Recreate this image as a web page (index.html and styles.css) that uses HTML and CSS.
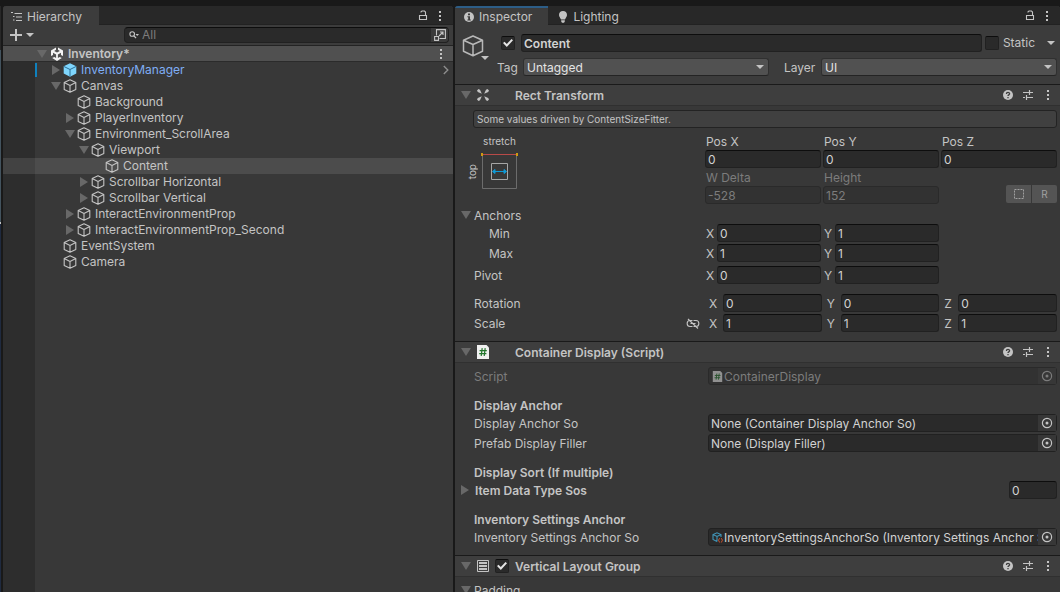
FILE: index.html
```html
<!DOCTYPE html>
<html lang="en">
<head>
  <meta charset="UTF-8" />
  <meta name="viewport" content="width=device-width, initial-scale=1.0"/>
  <title>Inventory - Editor</title>
  <link rel="stylesheet" href="styles.css">
</head>
<body>
  <!-- shared icons -->
  <svg class="defs" aria-hidden="true">
    <symbol id="cube" viewBox="0 0 14 14">
      <path d="M7 .8 12.8 3.6V10.4L7 13.3 1.2 10.4V3.6ZM1.2 3.6 7 6.4 12.8 3.6M7 6.4V13.3" fill="none" stroke="currentColor" stroke-width="1.1" stroke-linejoin="round"/>
    </symbol>
    <symbol id="prefab" viewBox="0 0 14 14">
      <path d="M7 .3 13.3 3.2V10.6L7 13.8.7 10.6V3.2Z" fill="#7fd6fd"/>
      <path d="M1 3.5 7 6.5 13 3.5M7 6.5V13.5" fill="none" stroke="#2c6f95" stroke-width="1"/>
    </symbol>
    <symbol id="unity" viewBox="0 0 14 14">
      <path d="M6 .5V2.800L4.200 3.900 7 5.500 9.800 3.900 8 2.800V.5L13 3.500V9L11 7.900V5.800L7.900 7.600V11L9.700 9.900 11.800 11.100 7 13.900 2.200 11.100 4.300 9.900 6.100 11V7.600L3 5.800V7.900L1 9V3.500Z" fill="#f4f4f4"/>
    </symbol>
    <symbol id="down" viewBox="0 0 10 8"><path d="M0 0H10L5 8Z" fill="currentColor"/></symbol>
    <symbol id="right" viewBox="0 0 8 10"><path d="M0 0 8 5 0 10Z" fill="currentColor"/></symbol>
    <symbol id="caret" viewBox="0 0 8 4"><path d="M0 0H8L4 4Z" fill="currentColor"/></symbol>
    <symbol id="lock" viewBox="0 0 10 11">
      <path d="M1.5 5.5H8.5V9.5H1.5ZM3 2.5V1.8L4 1H6.5L7.5 2V5.5" fill="none" stroke="currentColor" stroke-width="1.1"/>
    </symbol>
    <symbol id="dots" viewBox="0 0 4 12">
      <path d="M1 1H3V3H1ZM1 5H3V7H1ZM1 9H3V11H1Z" fill="currentColor"/>
    </symbol>
    <symbol id="help" viewBox="0 0 10 10">
      <circle cx="5" cy="5" r="5" fill="#c4c4c4"/>
      <path d="M3.4 3.9C3.4 1.9 6.6 1.9 6.6 3.8 6.6 4.9 5 4.8 5 6M5 6.9V8.2" fill="none" stroke="#3c3c3c" stroke-width="1.3"/>
    </symbol>
    <symbol id="preset" viewBox="0 0 12 12">
      <path d="M1 3.500H7M7.500 1V6M7.500 3.500H11M1 8.500H3M4.500 6V11M4.500 8.500H11" fill="none" stroke="#c4c4c4" stroke-width="1.2"/>
    </symbol>
    <symbol id="picker" viewBox="0 0 12 12">
      <circle cx="6" cy="6" r="4.6" fill="none" stroke="currentColor" stroke-width="1.2"/>
      <circle cx="6" cy="6" r="1.5" fill="currentColor"/>
    </symbol>
    <symbol id="script" viewBox="0 0 12 14">
      <path d="M0 0H9.5L12 2.5V14H0Z" fill="#f0f0f0"/>
      <path d="M5.2 3.2 4.2 11M8.2 3.2 7.2 11M2.6 5.7H9.8M2.2 8.6H9.4" fill="none" stroke="#23762c" stroke-width="1.2"/>
    </symbol>
  </svg>

  <div class="edge"></div>

  <section class="panel hierarchy">
    <div class="tabs">
      <button class="tab active">
        <svg width="12" height="10" viewBox="0 0 12 10"><path d="M0 .5H2M3.5 1.5H11M2 4.5H3.5M5 5H11M2 8H3.5M5 8.5H11" fill="none" stroke="#c4c4c4" stroke-width="1"/></svg>
        Hierarchy
      </button>
      <div class="tab-tools">
        <button aria-label="Lock"><svg width="10" height="11"><use href="#lock"/></svg></button>
        <button aria-label="Menu"><svg width="4" height="12"><use href="#dots"/></svg></button>
      </div>
    </div>
    <div class="toolbar">
      <button class="add" aria-label="Create">
        <svg width="12" height="12" viewBox="0 0 12 12"><path d="M6 0V12M0 6H12" stroke="#c4c4c4" stroke-width="2"/></svg>
        <svg width="8" height="4"><use href="#caret"/></svg>
      </button>
      <div class="search">
        <svg width="10" height="8" viewBox="0 0 10 8"><circle cx="3.2" cy="3" r="2.3" fill="none" stroke="#c4c4c4" stroke-width="1.1"/><path d="M5 4.8 7 7.2" stroke="#c4c4c4" stroke-width="1.3"/><path d="M6.5 3H10L8.2 5Z" fill="#c4c4c4"/></svg>
        <input type="text" placeholder="All" aria-label="Search hierarchy">
        <button aria-label="Open search window">
          <svg width="12" height="12" viewBox="0 0 12 12"><path d="M2.5 6.5V.6H11.4V9.5H5.5M.6 7.5H4.5V11.4H.6ZM5 7 9 3M6 3H9V6" fill="none" stroke="#c4c4c4" stroke-width="1.1"/></svg>
        </button>
      </div>
    </div>

    <div class="row scene">
      <svg class="fold" width="10" height="8"><use href="#down"/></svg>
      <svg width="14" height="14"><use href="#unity"/></svg>
      <span>Inventory*</span>
      <button class="row-end" aria-label="Scene menu"><svg width="4" height="12"><use href="#dots"/></svg></button>
    </div>
    <div class="tree">
      <div class="row d1 prefab">
        <svg class="fold" width="8" height="10"><use href="#right"/></svg>
        <svg width="14" height="14"><use href="#prefab"/></svg>
        <span>InventoryManager</span>
        <button class="row-end" aria-label="Open prefab"><svg width="6" height="10" viewBox="0 0 6 10"><path d="M.8 1 4.8 5 .8 9" fill="none" stroke="#8c8c8c" stroke-width="1.4"/></svg></button>
      </div>
      <div class="row d1">
        <svg class="fold" width="10" height="8"><use href="#down"/></svg>
        <svg width="14" height="14"><use href="#cube"/></svg>
        <span>Canvas</span>
      </div>
      <div class="row d2">
        <i class="fold"></i>
        <svg width="14" height="14"><use href="#cube"/></svg>
        <span>Background</span>
      </div>
      <div class="row d2">
        <svg class="fold" width="8" height="10"><use href="#right"/></svg>
        <svg width="14" height="14"><use href="#cube"/></svg>
        <span>PlayerInventory</span>
      </div>
      <div class="row d2">
        <svg class="fold" width="10" height="8"><use href="#down"/></svg>
        <svg width="14" height="14"><use href="#cube"/></svg>
        <span>Environment_ScrollArea</span>
      </div>
      <div class="row d3">
        <svg class="fold" width="10" height="8"><use href="#down"/></svg>
        <svg width="14" height="14"><use href="#cube"/></svg>
        <span>Viewport</span>
      </div>
      <div class="row d4 selected">
        <i class="fold"></i>
        <svg width="14" height="14"><use href="#cube"/></svg>
        <span>Content</span>
      </div>
      <div class="row d3">
        <svg class="fold" width="8" height="10"><use href="#right"/></svg>
        <svg width="14" height="14"><use href="#cube"/></svg>
        <span>Scrollbar Horizontal</span>
      </div>
      <div class="row d3">
        <svg class="fold" width="8" height="10"><use href="#right"/></svg>
        <svg width="14" height="14"><use href="#cube"/></svg>
        <span>Scrollbar Vertical</span>
      </div>
      <div class="row d2">
        <svg class="fold" width="8" height="10"><use href="#right"/></svg>
        <svg width="14" height="14"><use href="#cube"/></svg>
        <span>InteractEnvironmentProp</span>
      </div>
      <div class="row d2">
        <svg class="fold" width="8" height="10"><use href="#right"/></svg>
        <svg width="14" height="14"><use href="#cube"/></svg>
        <span>InteractEnvironmentProp_Second</span>
      </div>
      <div class="row d1">
        <i class="fold"></i>
        <svg width="14" height="14"><use href="#cube"/></svg>
        <span>EventSystem</span>
      </div>
      <div class="row d1">
        <i class="fold"></i>
        <svg width="14" height="14"><use href="#cube"/></svg>
        <span>Camera</span>
      </div>
    </div>
  </section>

  <section class="panel inspector">
    <div class="tabs">
      <button class="tab active focused">
        <svg width="10" height="10" viewBox="0 0 10 10"><circle cx="5" cy="5" r="5" fill="#c4c4c4"/><path d="M4 1.6H6V3.2H4ZM3.4 4.2H6V7.4H6.8V8.4H3.4V7.4H4.2V5.2H3.4Z" fill="#3c3c3c"/></svg>
        Inspector
      </button>
      <button class="tab">
        <svg width="8" height="12" viewBox="0 0 8 12"><path d="M4 0C6.400 0 8 1.700 8 3.900 8 5.700 6.500 6.700 6 8.500H2C1.500 6.700 0 5.700 0 3.900 0 1.700 1.600 0 4 0ZM2.200 9.300H5.800V10.500L5 11.700H3L2.200 10.500Z" fill="#c4c4c4"/></svg>
        Lighting
      </button>
      <div class="tab-tools">
        <button aria-label="Lock"><svg width="10" height="11"><use href="#lock"/></svg></button>
        <button aria-label="Menu"><svg width="4" height="12"><use href="#dots"/></svg></button>
      </div>
    </div>

    <div class="object">
      <button class="object-icon" aria-label="Select icon">
        <svg width="22" height="22" viewBox="0 0 22 22"><path d="M11 1 20.500 5.200V16.200L11 20.800 1.500 16.200V5.200ZM1.500 5.200 11 9.500 20.500 5.200M11 9.500V20.800" fill="none" stroke="#b8b8b8" stroke-width="1.500" stroke-linejoin="round"/></svg>
        <svg class="corner" width="8" height="4"><use href="#caret"/></svg>
      </button>
      <div class="object-rows">
        <div class="name-row">
          <input type="checkbox" checked aria-label="Active">
          <input type="text" class="field name" value="Content" aria-label="Name">
          <label class="static"><input type="checkbox"> Static</label>
          <button class="static-menu" aria-label="Static options"><svg width="8" height="4"><use href="#caret"/></svg></button>
        </div>
        <div class="tag-row">
          <label for="tag">Tag</label>
          <div class="select tag-select">
            <select id="tag"><option>Untagged</option></select>
            <svg width="8" height="4"><use href="#caret"/></svg>
          </div>
          <label for="layer" class="layer-label">Layer</label>
          <div class="select layer-select">
            <select id="layer"><option>UI</option></select>
            <svg width="8" height="4"><use href="#caret"/></svg>
          </div>
        </div>
      </div>
    </div>

    <!-- Rect Transform -->
    <div class="component">
      <svg class="fold" width="10" height="8"><use href="#down"/></svg>
      <svg class="icon" width="12" height="12" viewBox="0 0 12 12"><path d="M0 1.500 1.500 0 3 .8 4.800 4.800.8 3ZM12 1.500 10.500 0 9 .8 7.200 4.800 11.200 3ZM0 10.500 1.500 12 3 11.200 4.800 7.200.8 9ZM12 10.500 10.500 12 9 11.200 7.200 7.200 11.200 9Z" fill="#c4c4c4"/></svg>
      <h2>Rect Transform</h2>
      <div class="tools">
        <button aria-label="Help"><svg width="10" height="10"><use href="#help"/></svg></button>
        <button aria-label="Presets"><svg width="12" height="12"><use href="#preset"/></svg></button>
        <button aria-label="Options"><svg width="4" height="12"><use href="#dots"/></svg></button>
      </div>
    </div>
    <div class="body">
      <p class="help-box">Some values driven by ContentSizeFitter.</p>
      <div class="rect">
        <div class="anchor">
          <span class="anchor-h">stretch</span>
          <span class="anchor-v">top</span>
          <button class="anchor-box" aria-label="Anchor presets">
            <svg width="37" height="37" viewBox="0 0 37 37"><path d="M1.500 2V35.500H35.500V2" fill="none" stroke="#6c6c6c"/><path d="M1 1.500H36" stroke="#b84a48"/><path d="M0 0H2V3H0ZM35 0H37V3H35Z" fill="#cf9a10"/><path d="M10.500 10.500H26.500V26.500H10.500Z" fill="none" stroke="#a6a6a6"/><path d="M13 18.500H24M11.500 18.500 14 16.500V20.500ZM25.500 18.500 23 16.500V20.500Z" fill="#0f9ad6" stroke="#0f9ad6"/></svg>
          </button>
        </div>
        <div class="rect-fields">
          <label>Pos X <input type="text" class="field" value="0"></label>
          <label>Pos Y <input type="text" class="field" value="0"></label>
          <label>Pos Z <input type="text" class="field" value="0"></label>
          <label class="off">W Delta <input type="text" class="field" value="-528" disabled></label>
          <label class="off">Height <input type="text" class="field" value="152" disabled></label>
          <div class="modes">
            <button aria-label="Blueprint mode"><svg width="12" height="12" viewBox="0 0 12 12"><rect x="1.500" y="1.500" width="9" height="9" fill="none" stroke="#a0a0a0" stroke-dasharray="2 1"/></svg></button>
            <button>R</button>
          </div>
        </div>
      </div>

      <div class="prop foldout">
        <svg class="fold" width="10" height="8"><use href="#down"/></svg>
        <span>Anchors</span>
      </div>
      <div class="prop axes sub">
        <span>Min</span>
        <div class="vec">
          <label>X <input type="text" class="field" value="0"></label>
          <label>Y <input type="text" class="field" value="1"></label>
        </div>
      </div>
      <div class="prop axes sub max">
        <span>Max</span>
        <div class="vec">
          <label>X <input type="text" class="field" value="1"></label>
          <label>Y <input type="text" class="field" value="1"></label>
        </div>
      </div>
      <div class="prop axes pivot">
        <span>Pivot</span>
        <div class="vec">
          <label>X <input type="text" class="field" value="0"></label>
          <label>Y <input type="text" class="field" value="1"></label>
        </div>
      </div>
      <div class="prop gap">
        <span>Rotation</span>
        <div class="vec wide">
          <label>X <input type="text" class="field" value="0"></label>
          <label>Y <input type="text" class="field" value="0"></label>
          <label>Z <input type="text" class="field" value="0"></label>
        </div>
      </div>
      <div class="prop next">
        <span class="scale">Scale
          <button aria-label="Constrain proportions"><svg width="14" height="12" viewBox="0 0 14 12"><path d="M6.500 2.500H4C.2 2.500.2 8.500 4 8.500H6.500M7.500 2.500H10C13.800 2.500 13.800 8.500 10 8.500H7.500M4.500 5.500H9.500M2 1 12 10.500" fill="none" stroke="#c4c4c4" stroke-width="1.100"/></svg></button>
        </span>
        <div class="vec wide">
          <label>X <input type="text" class="field" value="1"></label>
          <label>Y <input type="text" class="field" value="1"></label>
          <label>Z <input type="text" class="field" value="1"></label>
        </div>
      </div>
    </div>

    <!-- Container Display -->
    <div class="component">
      <svg class="fold" width="10" height="8"><use href="#down"/></svg>
      <svg class="icon" width="12" height="14"><use href="#script"/></svg>
      <h2>Container Display (Script)</h2>
      <div class="tools">
        <button aria-label="Help"><svg width="10" height="10"><use href="#help"/></svg></button>
        <button aria-label="Presets"><svg width="12" height="12"><use href="#preset"/></svg></button>
        <button aria-label="Options"><svg width="4" height="12"><use href="#dots"/></svg></button>
      </div>
    </div>
    <div class="body">
      <div class="prop off">
        <span>Script</span>
        <div class="object-field">
          <svg class="ref-icon" width="11" height="11"><use href="#script"/></svg>
          <span>ContainerDisplay</span>
          <button disabled aria-label="Pick script"><svg width="12" height="12"><use href="#picker"/></svg></button>
        </div>
      </div>
      <h3>Display Anchor</h3>
      <div class="prop">
        <span>Display Anchor So</span>
        <div class="object-field">
          <span>None (Container Display Anchor So)</span>
          <button aria-label="Pick display anchor"><svg width="12" height="12"><use href="#picker"/></svg></button>
        </div>
      </div>
      <div class="prop next">
        <span>Prefab Display Filler</span>
        <div class="object-field">
          <span>None (Display Filler)</span>
          <button aria-label="Pick prefab"><svg width="12" height="12"><use href="#picker"/></svg></button>
        </div>
      </div>
      <h3>Display Sort (If multiple)</h3>
      <div class="prop foldout list">
        <svg class="fold" width="8" height="10"><use href="#right"/></svg>
        <label for="sos">Item Data Type Sos</label>
        <input type="text" id="sos" class="field size" value="0">
      </div>
      <h3>Inventory Settings Anchor</h3>
      <div class="prop">
        <span>Inventory Settings Anchor So</span>
        <div class="object-field">
          <svg class="ref-icon" width="11" height="11" viewBox="0 0 11 11"><path d="M9 5V2.500L5 .8 1 2.500V7.500L5 9.500M1 2.500 5 4.500 9 2.500M5 4.500V9.500" fill="none" stroke="#4195b8" stroke-width="1.100"/><path d="M7.600 6.200 6.500 8.200 7.600 10.500M9.300 6.200 10.400 8.200 9.300 10.500" fill="none" stroke="#d0532c"/></svg>
          <span>InventorySettingsAnchorSo (Inventory Settings Anchor So)</span>
          <button aria-label="Pick settings anchor"><svg width="12" height="12"><use href="#picker"/></svg></button>
        </div>
      </div>
    </div>

    <!-- Vertical Layout Group -->
    <div class="component">
      <svg class="fold" width="10" height="8"><use href="#down"/></svg>
      <svg class="icon" width="12" height="12" viewBox="0 0 12 12"><path d="M.5.5H11.500V11.500H.5Z" fill="none" stroke="#c4c4c4"/><path d="M2 3H10M2 6H10M2 9H10" stroke="#c4c4c4" stroke-width="1.800"/></svg>
      <input type="checkbox" checked aria-label="Enable Vertical Layout Group">
      <h2>Vertical Layout Group</h2>
      <div class="tools">
        <button aria-label="Help"><svg width="10" height="10"><use href="#help"/></svg></button>
        <button aria-label="Presets"><svg width="12" height="12"><use href="#preset"/></svg></button>
        <button aria-label="Options"><svg width="4" height="12"><use href="#dots"/></svg></button>
      </div>
    </div>
    <div class="body">
      <div class="prop foldout">
        <svg class="fold" width="10" height="8"><use href="#down"/></svg>
        <span>Padding</span>
      </div>
    </div>
  </section>
</body>
</html>
```
FILE: styles.css
```css
* {
  box-sizing: border-box;
}
body {
  margin: 0;
  height: 100vh;
  padding-top: 6px;
  display: grid;
  grid-template-columns: 3px 90fr 2px 121fr;
  grid-template-rows: 100%;
  overflow: hidden;
  background: #191919;
  color: #c4c4c4;
  font-family: Inter, "Liberation Sans", sans-serif;
  font-size: 12px;
  line-height: 18px;
}
svg {
  display: block;
  flex: none;
}
.defs {
  position: absolute;
  width: 0;
  height: 0;
}
button {
  display: flex;
  align-items: center;
  justify-content: center;
  padding: 0;
  border: none;
  background: none;
  color: inherit;
  font: inherit;
}
input, select {
  font: inherit;
  color: #d2d2d2;
  min-width: 0;
}
h2, h3, p {
  margin: 0;
  font-size: 12px;
  font-weight: 600;
}
.fold {
  color: #686868;
}

/* sliver of the neighbouring window */
.edge {
  width: 1px;
  background: linear-gradient(#282828 44px, #43535e 44px, #43535e 216px, #c4c4c4 216px, #c4c4c4 218px, #1f2a3f 218px);
}

.panel {
  background: #383838;
  min-width: 0;
  overflow: hidden;
  border-radius: 3px 3px 0 0;
}
.inspector {
  grid-column: 4;
}

/* tabs */
.tabs {
  display: flex;
  height: 19px;
  background: #282828;
  box-shadow: inset 0 -1px #222;
}
.tab {
  gap: 4px;
  padding: 3px 17px 0 8px;
}
.tab.active {
  background: #3c3c3c;
}
.tab.focused {
  gap: 5px;
  padding-left: 9px;
  padding-right: 16px;
  box-shadow: inset 0 2px #2c5d87;
}
.inspector .tab + .tab {
  gap: 6px;
  padding-left: 11px;
}
.tab-tools {
  display: flex;
  gap: 10px;
  margin-left: auto;
  padding-right: 11px;
}

/* hierarchy */
.toolbar {
  display: flex;
  align-items: center;
  height: 21px;
  padding: 0 4px 0 7px;
  background: #3c3c3c;
  border-bottom: 1px solid #232323;
}
.add {
  gap: 4px;
}
.search {
  display: flex;
  align-items: center;
  flex: 1;
  height: 16px;
  margin-left: 90px;
  padding-left: 4px;
  background: #2a2a2a;
  border: 1px solid #212121;
  border-top-color: #0d0d0d;
  border-radius: 4px;
  overflow: hidden;
}
.search input {
  flex: 1;
  height: 14px;
  padding: 0 3px;
  border: none;
  background: none;
}
.search input::placeholder {
  color: #7c7c7c;
  opacity: 1;
}
.search button {
  width: 17px;
  height: 14px;
  background: #3a3a3a;
}
.tree {
  height: 100%;
  background: linear-gradient(90deg, #2d2d2d 32px, transparent 32px);
}
.row {
  display: flex;
  align-items: center;
  height: 16px;
  line-height: 16px;
  gap: 4px;
  padding-left: 48px;
}
.row .fold {
  width: 10px;
  margin-right: -2px;
}
.row.scene {
  background: #505050;
  border-bottom: 1px solid #2b2b2b;
  padding-left: 34px;
  padding-right: 10px;
  font-weight: 600;
}
.scene .fold {
  margin-right: -1px;
}
.row.d2 {
  padding-left: 62px;
}
.row.d3 {
  padding-left: 76px;
}
.row.d4 {
  padding-left: 90px;
}
.row.selected {
  background: rgba(255, 255, 255, 0.1);
}
.row.prefab {
  background: linear-gradient(#0f81be, #0f81be) 32px 1px / 2px 14px no-repeat;
  padding-right: 4px;
  color: #7faef5;
}
.row-end {
  margin-left: auto;
}

/* object header */
.object {
  display: flex;
  height: 59px;
  padding: 9px 3px 0 7px;
  background: #3c3c3c;
}
.object-icon {
  position: relative;
  width: 22px;
  height: 24px;
}
.object-icon .corner {
  position: absolute;
  right: -5px;
  bottom: -2px;
}
.object-rows {
  flex: 1;
  min-width: 0;
}
.name-row, .tag-row {
  display: flex;
  align-items: center;
}
.name-row {
  padding-left: 17px;
}
.field {
  display: block;
  width: 100%;
  height: 18px;
  padding: 1px 2px 0;
  background: #2a2a2a;
  border: 1px solid #212121;
  border-top-color: #0d0d0d;
  border-radius: 3px;
}
.field:disabled {
  background: #323232;
  border-color: #2a2a2a;
  color: #7c7c7c;
}
.field.name {
  flex: 1;
  margin: 0 3px 0 6px;
  font-weight: 600;
}
input[type="checkbox"] {
  appearance: none;
  flex: none;
  width: 14px;
  height: 14px;
  margin: 0;
  background: #2a2a2a;
  border: 1px solid #212121;
  border-top-color: #0d0d0d;
  border-radius: 2px;
}
input[type="checkbox"]:checked {
  display: grid;
  place-items: center;
}
input[type="checkbox"]:checked::before {
  content: "";
  width: 10px;
  height: 8px;
  background: #e4e4e4;
  clip-path: polygon(0 50%, 15% 35%, 38% 62%, 85% 0, 100% 15%, 38% 100%);
}
.static {
  display: flex;
  align-items: center;
  gap: 4px;
}
.static-menu {
  margin-left: 12px;
  padding-right: 2px;
}
.tag-row {
  margin-top: 5px;
  padding-left: 13px;
}
.tag-row label {
  flex: none;
  width: 26px;
  padding-top: 2px;
}
.tag-row .layer-label {
  width: 37px;
  margin-left: 15px;
}
.select {
  position: relative;
}
.tag-select {
  flex: 246;
}
.layer-select {
  flex: 236;
}
.select select {
  appearance: none;
  display: block;
  width: 100%;
  height: 18px;
  padding: 0 3px;
  background: #515151;
  border: 1px solid #303030;
  border-bottom-color: #242424;
  border-radius: 3px;
  color: #e4e4e4;
}
.select svg {
  position: absolute;
  right: 5px;
  top: 7px;
}

/* component headers */
.component {
  display: flex;
  align-items: center;
  height: 22px;
  padding: 0 10px 0 6px;
  background: #3e3e3e;
  border-top: 1px solid #1a1a1a;
  border-bottom: 1px solid #303030;
}
.component .icon {
  margin: 0 6px;
}
.component h2 {
  margin-left: 20px;
  padding-top: 1px;
}
.component input + h2 {
  margin-left: 6px;
}
.component .tools {
  display: flex;
  gap: 9px;
  margin-left: auto;
}
.component .tools button + button + button {
  margin-left: 3px;
}

/* component bodies */
.body {
  padding: 4px 3px 9px 19px;
}
.help-box {
  height: 18px;
  margin: 0 0 4px -1px;
  padding-left: 3px;
  background: #404040;
  border: 1px solid #232323;
  border-radius: 3px;
  font-size: 10px;
  font-weight: 400;
  line-height: 17px;
}
.rect {
  display: grid;
  grid-template-columns: 231px 1fr;
}
.anchor {
  display: grid;
  grid-template-columns: 12px 37px;
  grid-template-rows: 21px 37px;
  justify-items: center;
  margin-left: -5px;
}
.anchor-h {
  grid-column: 2;
  font-size: 10px;
  line-height: 19px;
}
.anchor-v {
  grid-row: 2;
  justify-self: start;
  align-self: center;
  margin-left: -3px;
  writing-mode: vertical-rl;
  transform: rotate(180deg);
  font-size: 10px;
  line-height: 12px;
}
.rect-fields {
  display: grid;
  grid-template-columns: repeat(3, 1fr);
  column-gap: 2px;
}
.rect-fields label {
  text-indent: 1px;
  padding-top: 1px;
  line-height: 17px;
}
.rect-fields .field {
  text-indent: 0;
}
.off {
  color: #7c7c7c;
}
.modes {
  display: flex;
  gap: 1px;
  align-self: end;
  justify-self: end;
}
.modes button {
  width: 25px;
  height: 18px;
  margin-bottom: 1px;
  background: #545454;
  color: #a0a0a0;
  font-size: 10px;
  border-radius: 0 2px 2px 0;
}
.modes button:first-child {
  border-radius: 2px 0 0 2px;
}
.prop {
  display: grid;
  grid-template-columns: 234px 1fr;
  height: 18px;
}
.prop > span, .prop > label {
  padding-top: 1px;
}
.prop.axes {
  grid-template-columns: 231px 1fr;
}
.prop.sub > span {
  padding-left: 15px;
}
.prop.max, .prop.next {
  margin-top: 2px;
}
.prop.pivot {
  margin-top: 4px;
}
.prop.gap {
  margin-top: 10px;
}
.prop.foldout {
  display: flex;
  align-items: center;
  gap: 3px;
  margin-left: -13px;
}
.rect + .prop {
  margin-top: 2px;
}
.prop.list {
  gap: 6px;
  font-weight: 600;
}
.field.size {
  width: 48px;
  margin-left: auto;
  font-weight: 400;
}
.vec {
  display: grid;
  grid-template-columns: repeat(3, 1fr);
  column-gap: 2px;
}
.vec label {
  display: grid;
  grid-template-columns: 12px 1fr;
  text-indent: 1px;
  line-height: 20px;
}
.vec .field {
  text-indent: 0;
}
.vec.wide {
  column-gap: 4px;
}
.vec.wide label {
  grid-template-columns: 15px 1fr;
}
.prop > .scale {
  display: flex;
  justify-content: space-between;
  padding-right: 8px;
}
.scale button {
  height: 18px;
}
h3 {
  margin-top: 11px;
  height: 18px;
  padding-top: 1px;
}
.object-field {
  display: flex;
  align-items: center;
  min-width: 0;
  height: 18px;
  padding-left: 2px;
  background: #2a2a2a;
  border: 1px solid #212121;
  border-radius: 3px;
  color: #d2d2d2;
}
.object-field span {
  flex: 1;
  padding-top: 1px;
  overflow: hidden;
  white-space: nowrap;
}
.object-field button {
  width: 18px;
  height: 16px;
  background: #373737;
  color: #c4c4c4;
}
.ref-icon {
  margin: 0 1px;
}
.off .object-field {
  background: #323232;
  border-color: #2a2a2a;
  color: #7c7c7c;
}
.off .ref-icon {
  opacity: 0.5;
}
.off .object-field button {
  color: #7c7c7c;
}
```
